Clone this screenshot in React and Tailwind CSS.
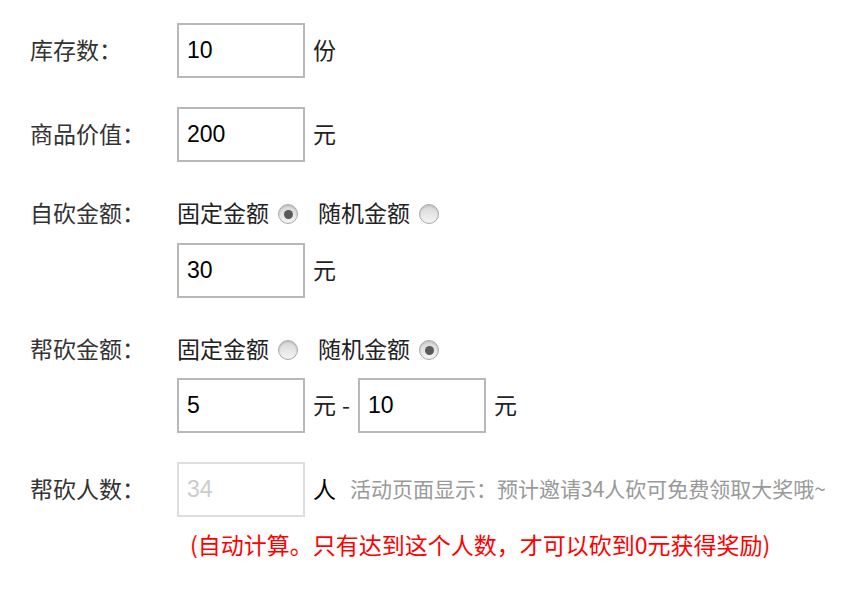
import React from "react";

const cjk = { fontFamily: '"Noto Sans CJK SC", "Noto Sans", sans-serif' };

function Radio({ checked }) {
  return (
    <span className="ml-[9px] inline-flex h-[20px] w-[20px] items-center justify-center rounded-full border border-[#a9a9a9] bg-gradient-to-b from-[#d6d6d6] to-[#f5f5f5] shadow-[inset_0_1px_2px_rgba(0,0,0,0.15)]">
      {checked && <span className="h-[9px] w-[9px] rounded-full bg-[#5a5a5a]" />}
    </span>
  );
}

function Input({ value, disabled }) {
  return (
    <div
      className={`flex h-[55px] w-[128px] items-center border-2 pl-[8px] text-[23px] leading-none ${
        disabled ? "border-[#dedede] text-[#cccccc]" : "border-[#b8b8b8] text-black"
      }`}
      style={{ fontFamily: '"Liberation Sans", Arial, sans-serif' }}
    >
      {value}
    </div>
  );
}

function Label({ children }) {
  return <div className="w-[147px] shrink-0 text-[23px] leading-none text-[#333] -mt-[3px]">{children}</div>;
}

function Unit({ children, className = "" }) {
  return <span className={`ml-[8px] -mt-[3px] text-[23px] leading-none text-[#222] ${className}`}>{children}</span>;
}

function RadioLine({ first }) {
  return (
    <div className="flex h-[46px] items-center text-[23px] leading-none text-[#222]">
      <span className="-mt-[3px]">固定金额</span>
      <Radio checked={first} />
      <span className="ml-[20px] -mt-[3px]">随机金额</span>
      <Radio checked={!first} />
    </div>
  );
}

export default function App() {
  return (
    <div className="min-h-[589px] w-[856px] bg-white pl-[30px] pt-[23px]" style={cjk}>
      <div className="mb-[29px] flex items-center">
        <Label>库存数：</Label>
        <Input value="10" />
        <Unit>份</Unit>
      </div>
      <div className="mb-[29px] flex items-center">
        <Label>商品价值：</Label>
        <Input value="200" />
        <Unit>元</Unit>
      </div>
      <div className="mb-[29px] flex items-start">
        <div className="flex h-[46px] items-center">
          <Label>自砍金额：</Label>
        </div>
        <div className="flex flex-col">
          <RadioLine first={true} />
          <div className="mt-[6px] flex items-center">
            <Input value="30" />
            <Unit>元</Unit>
          </div>
        </div>
      </div>
      <div className="mb-[29px] flex items-start">
        <div className="flex h-[46px] items-center">
          <Label>帮砍金额：</Label>
        </div>
        <div className="flex flex-col">
          <RadioLine first={false} />
          <div className="mt-[5px] flex items-center">
            <Input value="5" />
            <Unit>元</Unit>
            <span className="ml-[6px] mr-[8px] -mt-[3px] text-[23px] leading-none text-[#222]">-</span>
            <Input value="10" />
            <Unit>元</Unit>
          </div>
        </div>
      </div>
      <div className="flex items-center">
        <Label>帮砍人数：</Label>
        <Input value="34" disabled />
        <Unit className="text-black">人</Unit>
        <span className="ml-[14px] -mt-[3px] text-[21px] leading-none text-[#999]">活动页面显示：预计邀请34人砍可免费领取大奖哦~</span>
      </div>
      <div className="mt-[16px] pl-[147px] text-[23px] leading-none text-[#ff0000]">
        <span className="ml-[13px]">(自动计算。只有达到这个人数，才可以砍到0元获得奖励)</span>
      </div>
    </div>
  );
}
